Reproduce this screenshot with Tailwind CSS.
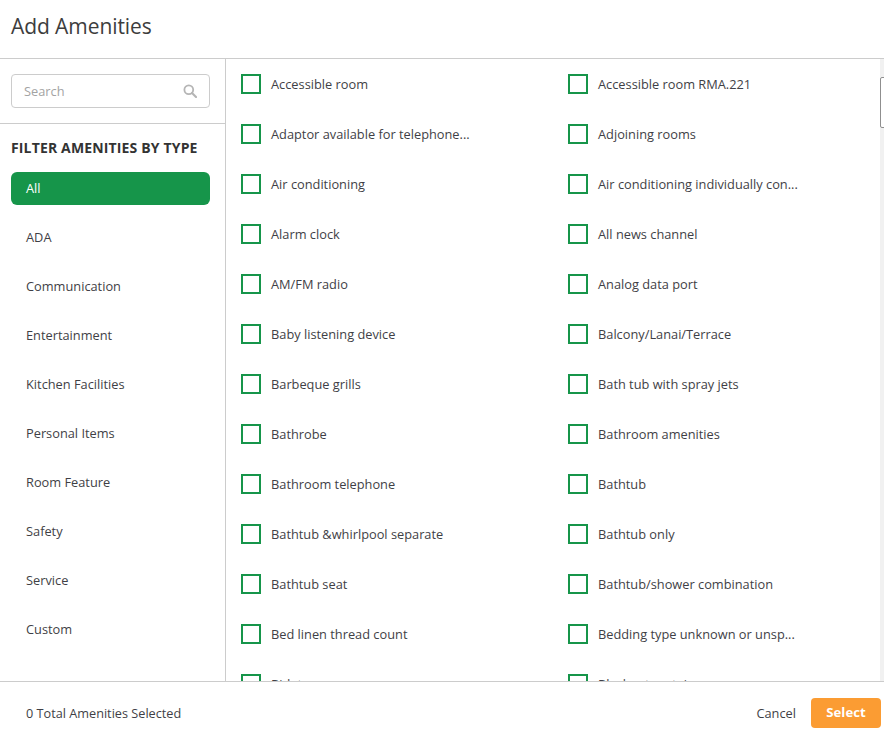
<!doctype html>
<html lang="en">
<head>
<meta charset="UTF-8">
<title>Add Amenities</title>
<script src="https://cdn.jsdelivr.net/npm/@tailwindcss/browser@4"></script>
</head>
<body class="w-[884px] h-[737px] overflow-hidden bg-white text-[#3f3f46] font-['Open_Sans',sans-serif]">
<div class="flex flex-col h-full">
	<header class="h-[59px] shrink-0 border-b border-[#cccccc] pl-[11px] pt-[10px]">
		<h1 class="text-[21px] leading-[32px] tracking-[-0.08px] text-[#3d3d3d]">Add Amenities</h1>
	</header>

	<div class="flex h-[622px] overflow-hidden">
		<aside class="w-[226px] shrink-0 border-r border-[#cccccc]">
			<div class="h-[65px] border-b border-[#cccccc] px-[11px] pt-[15px]">
				<div class="flex items-center justify-between h-[34px] w-[199px] rounded-[4px] border border-[#cccccc] pl-[12px] pr-[12px]">
					<span class="text-[12.8px] pt-[2px] text-[#a3a3a3]">Search</span>
					<svg class="w-[14px] h-[14px]" viewBox="0 0 14 14" fill="none" stroke="#b5b5b5" stroke-width="1.8"><circle cx="5.8" cy="5.8" r="4.4"/><path d="M9 9l4 4" stroke-linecap="round" stroke-width="2.2"/></svg>
				</div>
			</div>
			<h2 class="pl-[11px] mt-[14px] text-[14px] leading-[20px] font-bold tracking-[0.15px] text-[#333333]">FILTER AMENITIES BY TYPE</h2>
			<ul class="mt-[14px] px-[11px] text-[12.8px] text-[#3f3f46]">
				<li class="h-[33px] w-[199px] flex items-center pl-[15px] rounded-[6px] bg-[#16954a] text-white mb-[16px]">All</li>
				<li class="h-[33px] flex items-center pl-[15px] mb-[16px]">ADA</li>
				<li class="h-[33px] flex items-center pl-[15px] mb-[16px]">Communication</li>
				<li class="h-[33px] flex items-center pl-[15px] mb-[16px]">Entertainment</li>
				<li class="h-[33px] flex items-center pl-[15px] mb-[16px]">Kitchen Facilities</li>
				<li class="h-[33px] flex items-center pl-[15px] mb-[16px]">Personal Items</li>
				<li class="h-[33px] flex items-center pl-[15px] mb-[16px]">Room Feature</li>
				<li class="h-[33px] flex items-center pl-[15px] mb-[16px]">Safety</li>
				<li class="h-[33px] flex items-center pl-[15px] mb-[16px]">Service</li>
				<li class="h-[33px] flex items-center pl-[15px]">Custom</li>
			</ul>
		</aside>

		<main class="flex-1 overflow-hidden pl-[15px] pt-[15px]">
			<div class="grid grid-cols-[327px_287px] auto-rows-[50px] text-[12.8px] text-[#3f3f46]">
				<label class="flex items-start gap-[10px]"><span class="w-[20px] h-[20px] shrink-0 border-2 border-[#16954a]"></span><span class="leading-[20px]">Accessible room</span></label>
				<label class="flex items-start gap-[10px]"><span class="w-[20px] h-[20px] shrink-0 border-2 border-[#16954a]"></span><span class="leading-[20px]">Accessible room RMA.221</span></label>
				<label class="flex items-start gap-[10px]"><span class="w-[20px] h-[20px] shrink-0 border-2 border-[#16954a]"></span><span class="leading-[20px]">Adaptor available for telephone...</span></label>
				<label class="flex items-start gap-[10px]"><span class="w-[20px] h-[20px] shrink-0 border-2 border-[#16954a]"></span><span class="leading-[20px]">Adjoining rooms</span></label>
				<label class="flex items-start gap-[10px]"><span class="w-[20px] h-[20px] shrink-0 border-2 border-[#16954a]"></span><span class="leading-[20px]">Air conditioning</span></label>
				<label class="flex items-start gap-[10px]"><span class="w-[20px] h-[20px] shrink-0 border-2 border-[#16954a]"></span><span class="leading-[20px]">Air conditioning individually con...</span></label>
				<label class="flex items-start gap-[10px]"><span class="w-[20px] h-[20px] shrink-0 border-2 border-[#16954a]"></span><span class="leading-[20px]">Alarm clock</span></label>
				<label class="flex items-start gap-[10px]"><span class="w-[20px] h-[20px] shrink-0 border-2 border-[#16954a]"></span><span class="leading-[20px]">All news channel</span></label>
				<label class="flex items-start gap-[10px]"><span class="w-[20px] h-[20px] shrink-0 border-2 border-[#16954a]"></span><span class="leading-[20px]">AM/FM radio</span></label>
				<label class="flex items-start gap-[10px]"><span class="w-[20px] h-[20px] shrink-0 border-2 border-[#16954a]"></span><span class="leading-[20px]">Analog data port</span></label>
				<label class="flex items-start gap-[10px]"><span class="w-[20px] h-[20px] shrink-0 border-2 border-[#16954a]"></span><span class="leading-[20px]">Baby listening device</span></label>
				<label class="flex items-start gap-[10px]"><span class="w-[20px] h-[20px] shrink-0 border-2 border-[#16954a]"></span><span class="leading-[20px]">Balcony/Lanai/Terrace</span></label>
				<label class="flex items-start gap-[10px]"><span class="w-[20px] h-[20px] shrink-0 border-2 border-[#16954a]"></span><span class="leading-[20px]">Barbeque grills</span></label>
				<label class="flex items-start gap-[10px]"><span class="w-[20px] h-[20px] shrink-0 border-2 border-[#16954a]"></span><span class="leading-[20px]">Bath tub with spray jets</span></label>
				<label class="flex items-start gap-[10px]"><span class="w-[20px] h-[20px] shrink-0 border-2 border-[#16954a]"></span><span class="leading-[20px]">Bathrobe</span></label>
				<label class="flex items-start gap-[10px]"><span class="w-[20px] h-[20px] shrink-0 border-2 border-[#16954a]"></span><span class="leading-[20px]">Bathroom amenities</span></label>
				<label class="flex items-start gap-[10px]"><span class="w-[20px] h-[20px] shrink-0 border-2 border-[#16954a]"></span><span class="leading-[20px]">Bathroom telephone</span></label>
				<label class="flex items-start gap-[10px]"><span class="w-[20px] h-[20px] shrink-0 border-2 border-[#16954a]"></span><span class="leading-[20px]">Bathtub</span></label>
				<label class="flex items-start gap-[10px]"><span class="w-[20px] h-[20px] shrink-0 border-2 border-[#16954a]"></span><span class="leading-[20px]">Bathtub &amp;whirlpool separate</span></label>
				<label class="flex items-start gap-[10px]"><span class="w-[20px] h-[20px] shrink-0 border-2 border-[#16954a]"></span><span class="leading-[20px]">Bathtub only</span></label>
				<label class="flex items-start gap-[10px]"><span class="w-[20px] h-[20px] shrink-0 border-2 border-[#16954a]"></span><span class="leading-[20px]">Bathtub seat</span></label>
				<label class="flex items-start gap-[10px]"><span class="w-[20px] h-[20px] shrink-0 border-2 border-[#16954a]"></span><span class="leading-[20px]">Bathtub/shower combination</span></label>
				<label class="flex items-start gap-[10px]"><span class="w-[20px] h-[20px] shrink-0 border-2 border-[#16954a]"></span><span class="leading-[20px]">Bed linen thread count</span></label>
				<label class="flex items-start gap-[10px]"><span class="w-[20px] h-[20px] shrink-0 border-2 border-[#16954a]"></span><span class="leading-[20px]">Bedding type unknown or unsp...</span></label>
				<label class="flex items-start gap-[10px]"><span class="w-[20px] h-[20px] shrink-0 border-2 border-[#16954a]"></span><span class="leading-[20px]">Bidet</span></label>
				<label class="flex items-start gap-[10px]"><span class="w-[20px] h-[20px] shrink-0 border-2 border-[#16954a]"></span><span class="leading-[20px]">Blackout curtains</span></label>
			</div>
		</main>

		<div class="w-[4px] shrink-0 bg-[#f1f1f1] pt-[18px]">
			<div class="h-[51px] w-[8px] bg-white border border-[#8f8f8f] rounded-[2px]"></div>
		</div>
	</div>

	<footer class="flex-1 flex items-center justify-between border-t border-[#cccccc] pt-[7px] pl-[26px] pr-[3px] text-[12.8px] text-[#3f3f46]">
		<span class="pt-[1px] text-[12.7px]">0 Total Amenities Selected</span>
		<div class="flex items-center gap-[15px]">
			<button class="pt-[1px]">Cancel</button>
			<button class="w-[70px] h-[30px] rounded-[4px] bg-[#fb9c33] text-white text-[13.2px] font-bold">Select</button>
		</div>
	</footer>
</div>
</body>
</html>
